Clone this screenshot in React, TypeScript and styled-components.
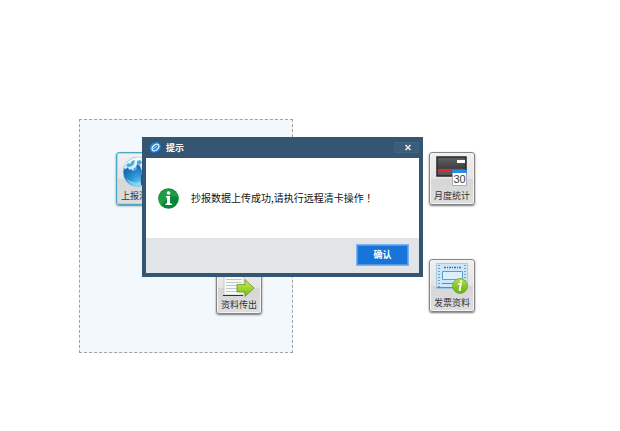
import React from "react";
import styled, { createGlobalStyle } from "styled-components";

const GlobalStyle = createGlobalStyle`
  * { box-sizing: border-box; }
  body {
    margin: 0;
    background: #fff;
    font-family: "Noto Sans CJK SC", sans-serif;
  }
`;

const Page = styled.main`
  position: relative;
  display: flex;
  justify-content: space-between;
  align-items: flex-start;
  padding: 119px 145px 78px 79px;
`;

const Panel = styled.section`
  display: grid;
  grid-template-columns: 46px 46px;
  grid-template-rows: 53px 53px;
  gap: 56px 54px;
  padding: 32px 30px 38px 36px;
  border: 1px dashed #a0a3a5;
  background: #f3f8fd;
`;

const SideColumn = styled.nav`
  display: flex;
  flex-direction: column;
  gap: 54px;
  padding-top: 33px;
`;

const Tile = styled.button<{ $active?: boolean; $second?: boolean }>`
  display: flex;
  flex-direction: column;
  align-items: center;
  justify-content: space-between;
  width: 46px;
  height: 53px;
  padding: 2px 0 1px;
  grid-area: ${(p) => (p.$second ? "2 / 2" : "auto")};
  border: 1px solid ${(p) => (p.$active ? "#4ba6cb" : "#858585")};
  border-radius: 3px;
  background: linear-gradient(#f0f0f0 0%, #e4e4e4 50%, #d6d6d6 51%, #dedede 100%);
  box-shadow: 0 1px 2px #777, inset 0 0 0 1px ${(p) => (p.$active ? "#a4dcf0" : "#f4f4f4")};
  color: #333;
  font-family: inherit;
  font-size: 9px;
  line-height: 14px;
  white-space: nowrap;
  cursor: pointer;

  svg { display: block; }
`;

const Dialog = styled.section`
  position: absolute;
  top: 137px;
  left: 142px;
  right: 197px;
  padding: 0 4px 4px;
  background: #345673;
`;

const TitleBar = styled.header`
  display: flex;
  align-items: center;
  gap: 4px;
  height: 21px;
  padding-left: 3px;
`;

const Title = styled.h1`
  flex: 1;
  margin: 0;
  color: #fff;
  font-size: 9px;
  line-height: 14px;
`;

const CloseButton = styled.button`
  display: flex;
  align-items: center;
  justify-content: flex-end;
  width: 25px;
  height: 11px;
  padding: 0 6px 0 0;
  border: 1px solid #41647f;
  background: #3b5d79;
  cursor: pointer;
`;

const Message = styled.div`
  display: flex;
  align-items: center;
  gap: 12px;
  height: 80px;
  padding-left: 12px;
  background: #fff;
`;

const MessageText = styled.p`
  margin: 0;
  color: #111;
  font-size: 10px;
  line-height: 16px;
  white-space: nowrap;
`;

const CenteredMark = styled.span`
  font-family: "Noto Sans CJK TC", sans-serif;
`;

const Footer = styled.footer`
  display: flex;
  justify-content: flex-end;
  padding: 6px 10px 7px;
  background: #e1e5e8;
`;

const ConfirmButton = styled.button`
  width: 53px;
  height: 22px;
  padding: 0;
  border: 1px solid #79b2ee;
  background: #1874d8;
  box-shadow: inset 0 0 0 1px #5298e5;
  color: #fff;
  font-family: inherit;
  font-size: 9px;
  font-weight: 700;
  line-height: 16px;
  cursor: pointer;
`;

const GlobeIcon = () => (
  <svg width="34" height="34" viewBox="0 0 34 34" aria-hidden="true">
    <defs>
      <radialGradient id="globe" cx=".55" cy=".9" r=".9">
        <stop offset="0" stopColor="#62cdf5" />
        <stop offset=".35" stopColor="#2b96d8" />
        <stop offset=".7" stopColor="#1769b2" />
        <stop offset="1" stopColor="#4ba8dc" />
      </radialGradient>
      <linearGradient id="land" x2="0" y2="1">
        <stop stopColor="#ffffff" />
        <stop offset="1" stopColor="#b9e2f6" />
      </linearGradient>
    </defs>
    <circle cx="16" cy="17" r="15" fill="url(#globe)" />
    <path d="M1.500 13Q5 3 16 2q11 1 14 11l-3 3-2-2-2 4-3-2-2-5-3-2-1 4-3 3-2-2-2 1-1-3-2 2z" fill="url(#land)" />
    <path d="M4 11l2-3 2 1 2-3 3-1-1 4-2 2-3 1zM15 6l3-1 2 2-2 3-3-1zM11 14l3-2 1 2-2 2z" fill="#4ba9dc" />
    <path d="M4 23q7 7 21 3-3 5-10 5.500Q8 31 4 23z" fill="#9ce4fc" opacity=".65" />
    <circle cx="16" cy="17" r="15" fill="none" stroke="#b4d2e2" strokeWidth=".7" />
    <path d="M19 20h11v10H19z" fill="#45494f" />
    <path d="M21 22h7v5h-7z" fill="#a7b3be" />
  </svg>
);

const ExportIcon = () => (
  <svg width="34" height="34" viewBox="0 0 34 34" aria-hidden="true">
    <defs>
      <linearGradient id="arrow" x2="0" y2="1">
        <stop stopColor="#cbed5a" />
        <stop offset="1" stopColor="#79bd12" />
      </linearGradient>
    </defs>
    <path d="M2 2h20v29H2z" fill="#f8f9fa" stroke="#b6babd" strokeWidth=".7" />
    <path d="M4 6.500h16M4 9.500h16M4 12.500h16M4 15.500h16M4 18.500h16M4 21.500h12M4 24.500h12M4 27.500h12" stroke="#c2c7ca" />
    <path d="M1 31.500h20" stroke="#333" />
    <path d="M15 20.500h8v-5l9 8.500-9 8.500V28h-8z" fill="url(#arrow)" stroke="#669c18" strokeWidth=".8" />
  </svg>
);

const CalendarIcon = () => (
  <svg width="34" height="34" viewBox="0 0 34 34" aria-hidden="true">
    <defs>
      <linearGradient id="screen" x2="0" y2="1">
        <stop stopColor="#606264" />
        <stop offset=".6" stopColor="#3d3f41" />
        <stop offset=".65" stopColor="#646668" />
        <stop offset="1" stopColor="#505254" />
      </linearGradient>
    </defs>
    <path d="M2 2h29v19H2z" fill="url(#screen)" stroke="#262728" strokeWidth="1.500" />
    <path d="M2.500 15.500h28" stroke="#df2028" />
    <path d="M22 5h8v3h-8z" fill="#fff" />
    <path d="M17.500 15.500h14v15h-14z" fill="#fff" stroke="#8c98a2" strokeWidth=".7" />
    <path d="M17 15h15v3H17z" fill="#2b8be0" />
    <text x="24.500" y="28" textAnchor="middle" fontFamily="Liberation Sans" fontSize="11" fill="#3e4245">30</text>
  </svg>
);

const InvoiceIcon = () => (
  <svg width="34" height="34" viewBox="0 0 34 34" aria-hidden="true">
    <defs>
      <linearGradient id="badge" x2="0" y2="1">
        <stop stopColor="#b5df48" />
        <stop offset="1" stopColor="#62b010" />
      </linearGradient>
    </defs>
    <path d="M1.500 1.500h31v25h-31z" fill="#cce7fa" stroke="#91bddd" strokeWidth=".7" />
    <path d="M4 3v22M30 3v16" stroke="#527690" strokeWidth="1.300" strokeDasharray="1 2" />
    <path d="M9 5.500h17" stroke="#526b7d" strokeWidth="1.500" strokeDasharray="2 1 1 1" />
    <path d="M7.500 9.500h20v8h-20z" fill="#daf0ff" stroke="#5c9dcc" />
    <path d="M7 21.500h14M2 25.500h18" stroke="#4e91c2" />
    <circle cx="25" cy="24" r="7.500" fill="url(#badge)" stroke="#6da317" strokeWidth=".7" />
    <path d="M23 22h3l-1.500 6H26" fill="none" stroke="#fff" strokeWidth="1.700" />
    <circle cx="26" cy="19.500" r="1.200" fill="#fff" />
  </svg>
);

const LogoIcon = () => (
  <svg width="13" height="13" viewBox="0 0 13 13" aria-hidden="true">
    <path d="M1 8Q0 4 4 2l5-1 3 4-1 5-5 2-4-1z" fill="#218bdc" />
    <path d="M1 9l4 3 5-2 2-5-1 6-5 2z" fill="#1656a9" />
    <ellipse cx="6.500" cy="6.500" rx="4" ry="2.500" transform="rotate(-45 6.500 6.500)" fill="none" stroke="#fff" strokeWidth="1.100" />
    <path d="M4 8l4-3" stroke="#d7f3ff" strokeWidth=".8" />
  </svg>
);

const InfoIcon = () => (
  <svg width="21" height="21" viewBox="0 0 21 21" aria-hidden="true">
    <circle cx="10.500" cy="10.500" r="10.300" fill="#078637" />
    <path d="M3 5Q7 0 13 1.500q6 2 7 8Q12 5 3 18-2 11 3 5z" fill="#32a64a" opacity=".65" />
    <circle cx="10.500" cy="5" r="1.800" fill="#fff" />
    <path d="M8 8h4v7.500h2V17H7.500v-1.500H9V9.500H8z" fill="#fff" />
  </svg>
);

export default function App() {
  return (
    <>
      <GlobalStyle />
      <Page lang="zh-CN">
        <Panel>
          <Tile type="button" $active><GlobeIcon />上报汇总</Tile>
          <Tile type="button" $second><ExportIcon />资料传出</Tile>
        </Panel>
        <SideColumn>
          <Tile type="button"><CalendarIcon />月度统计</Tile>
          <Tile type="button"><InvoiceIcon />发票资料</Tile>
        </SideColumn>
        <Dialog role="dialog" aria-labelledby="dialog-title" aria-describedby="dialog-message">
          <TitleBar>
            <LogoIcon />
            <Title id="dialog-title">提示</Title>
            <CloseButton type="button" aria-label="关闭">
              <svg width="8" height="7" viewBox="0 0 8 7" aria-hidden="true">
                <path d="M1.500 1l5 5M6.500 1l-5 5" stroke="#e5e9ed" strokeWidth="1.600" />
              </svg>
            </CloseButton>
          </TitleBar>
          <Message>
            <InfoIcon />
            <MessageText id="dialog-message">
              抄报数据上传成功,请执行远程清卡操作<CenteredMark lang="zh-TW">！</CenteredMark>
            </MessageText>
          </Message>
          <Footer>
            <ConfirmButton type="button">确认</ConfirmButton>
          </Footer>
        </Dialog>
      </Page>
    </>
  );
}
